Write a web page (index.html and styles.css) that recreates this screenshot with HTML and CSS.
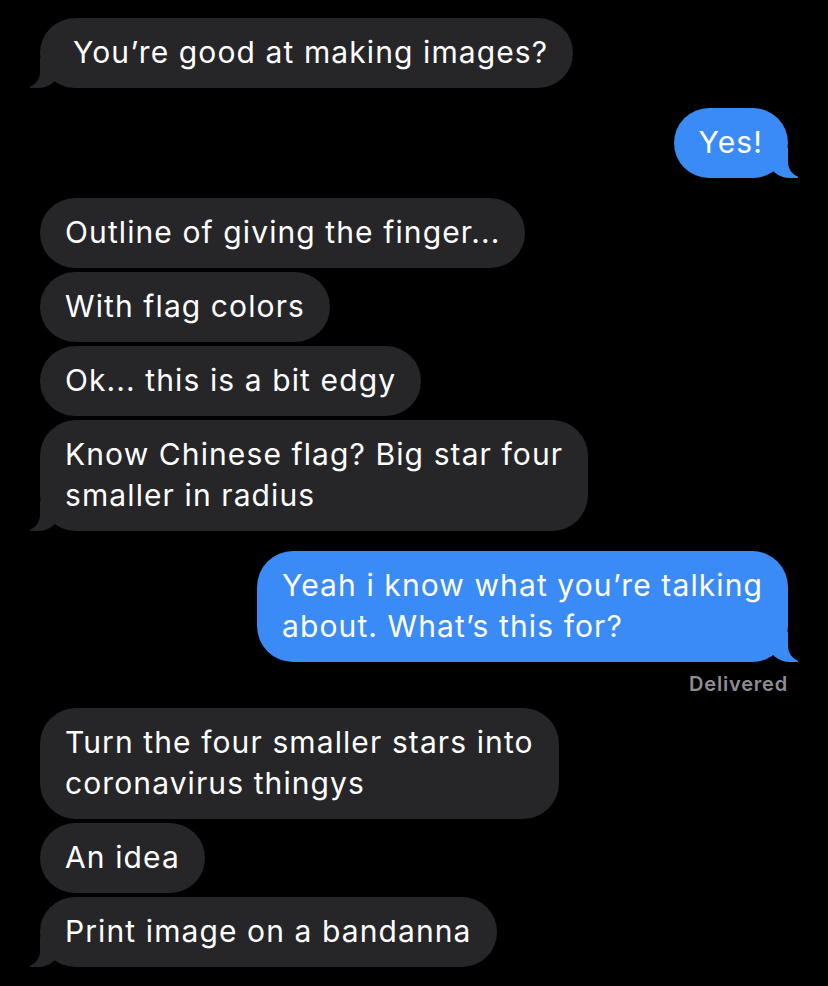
FILE: index.html
```html
<!DOCTYPE html>
<html>
<head>
<meta charset="utf-8">
<link rel="stylesheet" href="styles.css">
</head>
<body>
<div class="chat">
  <div class="msg them tail first">You’re good at making images?</div>
  <div class="msg me tail sep">Yes!</div>
  <div class="msg them sep">Outline of giving the finger...</div>
  <div class="msg them">With flag colors</div>
  <div class="msg them">Ok... this is a bit edgy</div>
  <div class="msg them tail">Know Chinese flag? Big star four<br>smaller in radius</div>
  <div class="msg me tail sep">Yeah i know what you’re talking<br>about. What’s this for?</div>
  <div class="status">Delivered</div>
  <div class="msg them">Turn the four smaller stars into<br>coronavirus thingys</div>
  <div class="msg them">An idea</div>
  <div class="msg them tail">Print image on a bandanna</div>
</div>
</body>
</html>
```
FILE: styles.css
```css
html, body {
  margin: 0;
  padding: 0;
  background: #000;
}
.chat {
  display: flex;
  flex-direction: column;
  padding: 18px 40px 0 40px;
  gap: 4px;
  font-family: Inter, "Noto Sans", sans-serif;
}
.msg {
  position: relative;
  font-size: 30px;
  line-height: 41px;
  padding: 14px 25px 15px 25px;
  border-radius: 36px;
  color: #fff;
  white-space: nowrap;
  letter-spacing: 1.1px;
}
.msg.first {
  padding-left: 33px;
}
.them {
  align-self: flex-start;
  background: #262628;
}
.me {
  align-self: flex-end;
  background: #3b8bf6;
}
.sep {
  margin-top: 16px;
}
.them.tail::before {
  content: "";
  position: absolute;
  bottom: 0;
  left: -10px;
  width: 30px;
  height: 30px;
  background: #262628;
  border-bottom-right-radius: 22px 20px;
}
.them.tail::after {
  content: "";
  position: absolute;
  bottom: 0;
  left: -36px;
  width: 36px;
  height: 30px;
  background: #000;
  border-bottom-right-radius: 16px;
}
.me.tail::before {
  content: "";
  position: absolute;
  bottom: 0;
  right: -10px;
  width: 30px;
  height: 30px;
  background: #3b8bf6;
  border-bottom-left-radius: 22px 20px;
}
.me.tail::after {
  content: "";
  position: absolute;
  bottom: 0;
  right: -36px;
  width: 36px;
  height: 30px;
  background: #000;
  border-bottom-left-radius: 16px;
}
.status {
  align-self: flex-end;
  font-size: 20px;
  line-height: 24px;
  font-weight: 600;
  letter-spacing: 0.8px;
  color: #8d8d92;
  margin: 6px 0 8px 0;
}
```
